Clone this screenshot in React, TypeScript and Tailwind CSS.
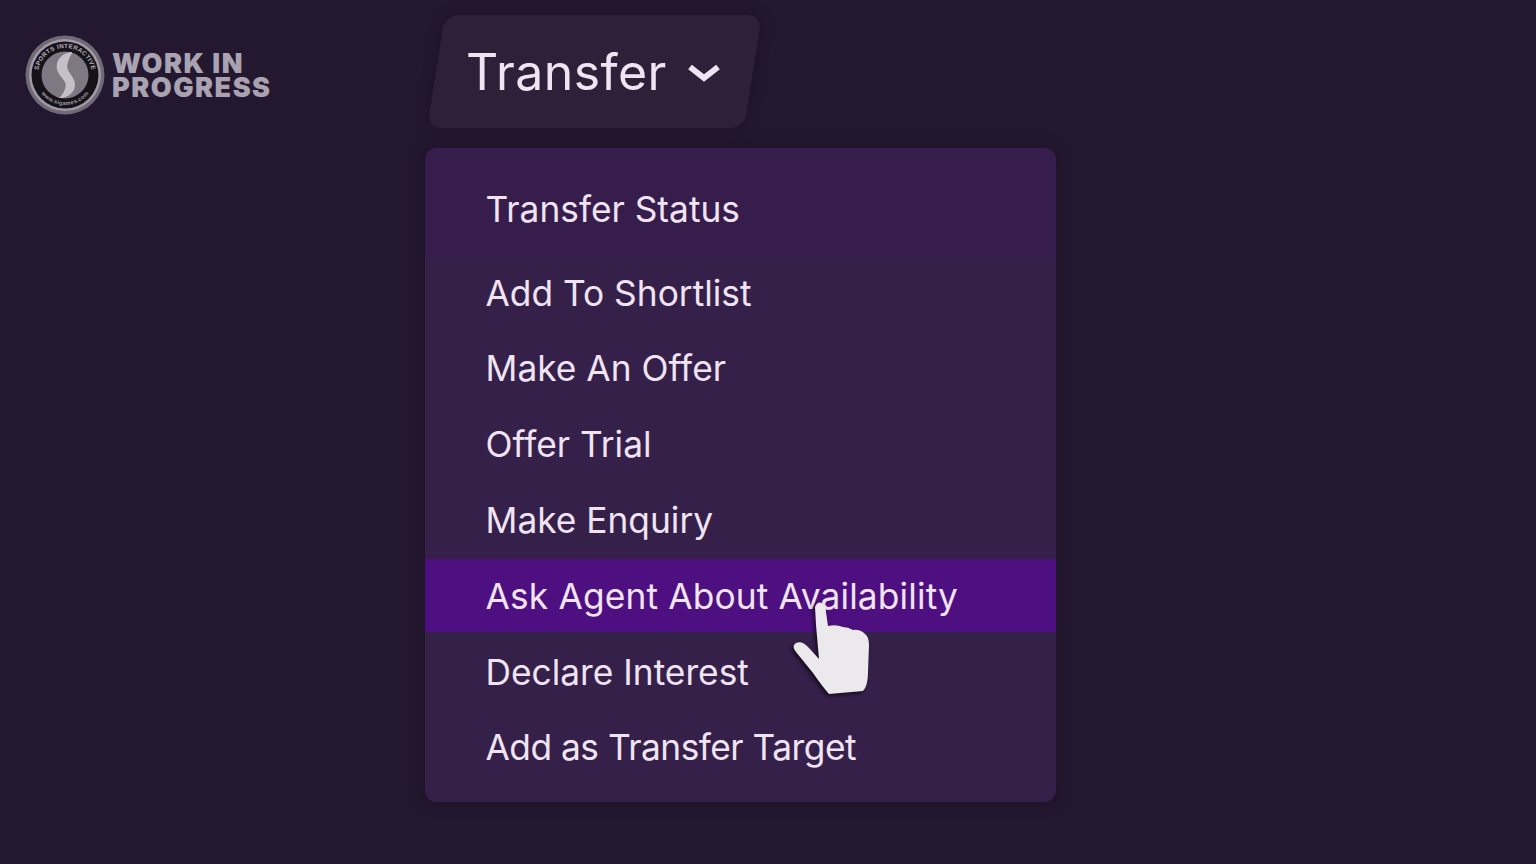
const items = [
  { label: "Add To Shortlist", className: "" },
  { label: "Make An Offer", className: "" },
  { label: "Offer Trial", className: "" },
  { label: "Make Enquiry", className: "" },
  { label: "Ask Agent About Availability", className: "bg-[#4e1080] tracking-[0.15px]" },
  { label: "Declare Interest", className: "" },
  { label: "Add as Transfer Target", className: "tracking-[-0.5px]" },
];

function Logo() {
  return (
    <svg width="80" height="80" viewBox="0 0 80 80" className="shrink-0">
      <defs>
        <path id="logoTop" d="M 13 40 A 27 27 0 0 1 67 40" />
        <path id="logoBottom" d="M 11 48 A 30.1 30.1 0 0 0 69 48" />
      </defs>
      <circle cx="40" cy="40" r="39.5" fill="#6f6a75" />
      <circle cx="40" cy="40" r="36" fill="#a09aa6" />
      <circle cx="40" cy="40" r="33.5" fill="#15121a" />
      <circle cx="40" cy="40" r="23.5" fill="#7d7882" />
      <path
        d="M47 17 C35 18 29 28 33 37 C36 44 43 46 40 54 C38 59 36 62 33 63 C44 64 53 55 49 45 C46 38 40 35 43 27 C44 23 46 20 47 18 Z"
        fill="#c4bfc8"
      />
      <text className="fill-[#b5b0ba] text-[6.2px] font-bold tracking-[0.35px]" style={{ fontFamily: '"Liberation Sans", sans-serif' }}>
        <textPath href="#logoTop" startOffset="50%" textAnchor="middle">SPORTS INTERACTIVE</textPath>
      </text>
      <text className="fill-[#9d98a3] text-[5.6px] font-bold tracking-[0.3px]" style={{ fontFamily: '"Liberation Sans", sans-serif' }}>
        <textPath href="#logoBottom" startOffset="50%" textAnchor="middle">www.sigames.com</textPath>
      </text>
    </svg>
  );
}

function HandCursor() {
  return (
    <svg
      width="90"
      height="104"
      viewBox="785 595 90 104"
      className="absolute left-[360px] top-[447px] drop-shadow-[-2px_2px_2px_rgba(10,5,15,0.75)]"
    >
      <path
        d="M815 607 Q818 600 823 604 Q826 606 826 612 L828 626 Q836 624 843 627 Q848 627 853 630 Q860 629 865 634 Q869 637 869 645 L868 672 Q868 686 863 691 L829 694 Q822 686 813 673 L796 652 Q791 646 796 643 Q802 640 809 648 L819 659 L816 625 Z"
        fill="#ebe9ec"
      />
    </svg>
  );
}

export default function App() {
  return (
    <div className="flex h-[864px] w-full overflow-hidden bg-[#241830] font-['Inter',sans-serif] text-[#f0e4f3]">
      <div className="w-[425px] shrink-0 pl-[25px] pt-[35px]">
        <div className="flex items-center gap-[7px]">
          <Logo />
          <div className="pt-[2px] text-[27px] font-black leading-[24.5px] tracking-[1.5px] text-[#a9a3b1]">
            <div>WORK IN</div>
            <div>PROGRESS</div>
          </div>
        </div>
      </div>

      <div className="w-[631px] shrink-0 pt-[15px]">
        <div className="relative ml-[11px] flex h-[113px] w-[317px] items-center pl-[30px]">
          <div className="absolute inset-0 -skew-x-[9deg] rounded-[14px] bg-[#2e2038] shadow-[0_0_12px_rgba(24,14,32,0.6)]" />
          <span className="relative text-[50px] leading-none tracking-[0.45px]">Transfer</span>
          <svg width="34" height="22" viewBox="0 0 34 22" className="relative ml-[20px] mt-[3px]">
            <path d="M3 5 L17 16 L31 5" fill="none" stroke="#f0e4f3" strokeWidth="6" />
          </svg>
        </div>

        <div className="relative mt-[20px] h-[654px] rounded-[12px] bg-[#35204a] shadow-[0_0_14px_rgba(24,14,32,0.7)]">
          <HandCursor />
          <div className="flex h-[108px] items-center rounded-t-[12px] bg-[#361d4c] pl-[60.5px] pt-[16px] text-[35.3px]">
            Transfer Status
          </div>
          <div className="flex flex-col gap-[2.8px]">
            {items.map((item) => (
              <div key={item.label} className={`flex h-[73px] items-center pl-[60.5px] pt-[3px] text-[35.3px] ${item.className}`}>
                {item.label}
              </div>
            ))}
          </div>
        </div>
      </div>
    </div>
  );
}
